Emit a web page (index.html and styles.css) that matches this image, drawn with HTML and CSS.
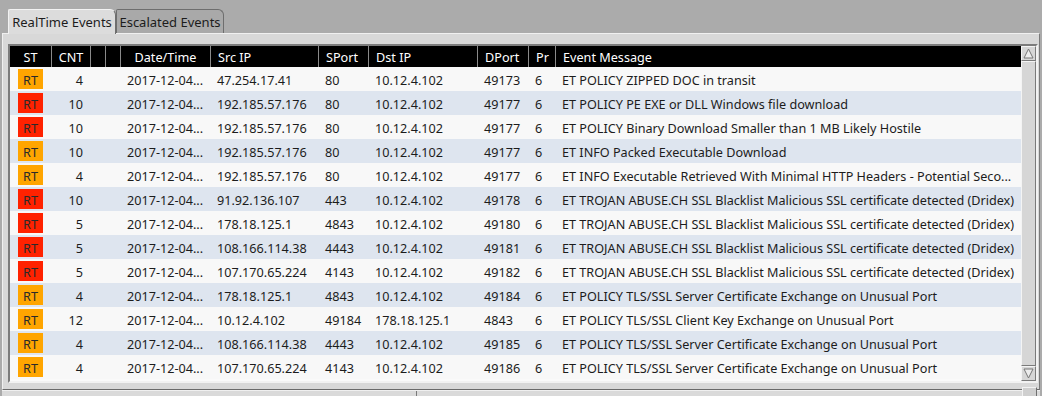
FILE: index.html
```html
<!DOCTYPE html>
<html lang="en">
<head>
    <meta charset="UTF-8">
    <title>Event Viewer</title>
    <link rel="stylesheet" href="styles.css">
</head>
<body>
    <!-- Tabs -->
    <div class="tabs">
        <div class="tab active">RealTime Events</div>
        <div class="tab">Escalated Events</div>
    </div>

    <!-- Tab panel with event table -->
    <div class="panel">
        <div class="table-box">
            <div class="table">
                <div class="row head">
                    <div class="c center">ST</div>
                    <div class="c center">CNT</div>
                    <div class="c"></div>
                    <div class="c"></div>
                    <div class="c center">Date/Time</div>
                    <div class="c">Src IP</div>
                    <div class="c">SPort</div>
                    <div class="c">Dst IP</div>
                    <div class="c">DPort</div>
                    <div class="c">Pr</div>
                    <div class="c">Event Message</div>
                </div>
                <div id="rows"></div>
            </div>
            <div class="vscroll">
                <div class="sbtn">
                    <svg width="13" height="13" viewBox="0 0 13 13"><polygon points="6.5,2 11,11 2,11" fill="#ececec" stroke="#777" stroke-width="1"/></svg>
                </div>
                <div class="slider"></div>
                <div class="sbtn">
                    <svg width="13" height="13" viewBox="0 0 13 13"><polygon points="6.5,11 11,2 2,2" fill="#ececec" stroke="#777" stroke-width="1"/></svg>
                </div>
            </div>
        </div>
    </div>
    <div class="hbar">
        <div class="hthumb"></div>
    </div>
    <div class="corner"></div>

    <script>
        const events = [
            ['o', 4, '47.254.17.41', 80, '10.12.4.102', 49173, 'ET POLICY ZIPPED DOC in transit'],
            ['r', 10, '192.185.57.176', 80, '10.12.4.102', 49177, 'ET POLICY PE EXE or DLL Windows file download'],
            ['r', 10, '192.185.57.176', 80, '10.12.4.102', 49177, 'ET POLICY Binary Download Smaller than 1 MB Likely Hostile'],
            ['o', 10, '192.185.57.176', 80, '10.12.4.102', 49177, 'ET INFO Packed Executable Download'],
            ['o', 4, '192.185.57.176', 80, '10.12.4.102', 49177, 'ET INFO Executable Retrieved With Minimal HTTP Headers - Potential Seco...'],
            ['r', 10, '91.92.136.107', 443, '10.12.4.102', 49178, 'ET TROJAN ABUSE.CH SSL Blacklist Malicious SSL certificate detected (Dridex)'],
            ['r', 5, '178.18.125.1', 4843, '10.12.4.102', 49180, 'ET TROJAN ABUSE.CH SSL Blacklist Malicious SSL certificate detected (Dridex)'],
            ['r', 5, '108.166.114.38', 4443, '10.12.4.102', 49181, 'ET TROJAN ABUSE.CH SSL Blacklist Malicious SSL certificate detected (Dridex)'],
            ['r', 5, '107.170.65.224', 4143, '10.12.4.102', 49182, 'ET TROJAN ABUSE.CH SSL Blacklist Malicious SSL certificate detected (Dridex)'],
            ['o', 4, '178.18.125.1', 4843, '10.12.4.102', 49184, 'ET POLICY TLS/SSL Server Certificate Exchange on Unusual Port'],
            ['o', 12, '10.12.4.102', 49184, '178.18.125.1', 4843, 'ET POLICY TLS/SSL Client Key Exchange on Unusual Port'],
            ['o', 4, '108.166.114.38', 4443, '10.12.4.102', 49185, 'ET POLICY TLS/SSL Server Certificate Exchange on Unusual Port'],
            ['o', 4, '107.170.65.224', 4143, '10.12.4.102', 49186, 'ET POLICY TLS/SSL Server Certificate Exchange on Unusual Port']
        ];

        let html = '';
        events.forEach(function (e) {
            html += '<div class="row">' +
                '<div class="c center"><span class="badge ' + (e[0] === 'r' ? 'red' : 'orange') + '">RT</span></div>' +
                '<div class="c right">' + e[1] + '</div>' +
                '<div class="c"></div><div class="c"></div>' +
                '<div class="c">2017-12-04...</div>' +
                '<div class="c">' + e[2] + '</div>' +
                '<div class="c">' + e[3] + '</div>' +
                '<div class="c">' + e[4] + '</div>' +
                '<div class="c">' + e[5] + '</div>' +
                '<div class="c">6</div>' +
                '<div class="c">' + e[6] + '</div>' +
                '</div>';
        });
        document.getElementById('rows').innerHTML = html;
    </script>
</body>
</html>
```

FILE: styles.css
```css
body {
    margin: 0;
    width: 1042px;
    height: 396px;
    overflow: hidden;
    background: #ababab;
    font-family: "Noto Sans", sans-serif;
    color: #1c1c1c;
}

.tabs {
    display: flex;
    height: 24px;
    padding: 9px 0 0 8px;
}

.tab {
    box-sizing: border-box;
    width: 108px;
    height: 24px;
    font-size: 13px;
    line-height: 24px;
    text-align: center;
    background: #a9a9a9;
    border: 1px solid #6e6e6e;
    border-bottom: none;
    border-radius: 2px 6px 0 0;
}

.tab.active {
    position: relative;
    z-index: 1;
    height: 25px;
    margin-bottom: -1px;
    background: #dcdcdc;
    border-color: #f2f2f2 #6e6e6e #6e6e6e #f2f2f2;
}

.panel {
    box-sizing: border-box;
    height: 357px;
    margin: 0 2px;
    padding: 10px 0 0 5px;
    background: #d8d8d8;
    border-top: 1px solid #f0f0f0;
    border-left: 1px solid #f0f0f0;
    border-right: 1px solid #7a7a7a;
    border-bottom: 1px solid #6a6a6a;
}

.table-box {
    display: flex;
    width: 1030px;
    height: 339px;
    box-sizing: border-box;
    border: 2px solid;
    border-color: #7c7c7c #f2f2f2 #f2f2f2 #7c7c7c;
    background: #fafafa;
}

.table {
    width: 1011px;
    overflow: hidden;
}

.row {
    display: grid;
    grid-template-columns: 41px 39px 15px 15px 90px 108px 50px 109px 51px 27px 466px;
    height: 24px;
    font-size: 12.65px;
    line-height: 26px;
}

#rows .row:nth-child(odd) {
    background: #f8f8f8;
}

#rows .row:nth-child(even) {
    background: #dee5ef;
}

.row.head {
    height: 21px;
    line-height: 22px;
    background: #000;
    color: #fff;
}

.c {
    height: 100%;
    padding: 0 7px;
    white-space: nowrap;
    overflow: hidden;
}

.head .c {
    border-left: 1px solid #8a8a8a;
}

.head .c:first-child {
    border-left: none;
}

.center {
    padding: 0;
    text-align: center;
}

.right {
    text-align: right;
}

.badge {
    display: inline-block;
    width: 25px;
    height: 20px;
    margin-top: 2px;
    line-height: 22px;
    vertical-align: top;
    color: #2a2a2a;
}

.badge.orange {
    background: #ffa500;
}

.badge.red {
    background: #ff2200;
}

.vscroll {
    display: flex;
    flex-direction: column;
    width: 15px;
    background: #d4d4d4;
}

.sbtn {
    box-sizing: border-box;
    height: 15px;
    border: 1px solid;
    border-color: #f4f4f4 #7a7a7a #7a7a7a #f4f4f4;
    background: #d6d6d6;
    display: flex;
    align-items: center;
    justify-content: center;
}

.slider {
    flex: 1;
    box-sizing: border-box;
    border: 1px solid;
    border-color: #f4f4f4 #7a7a7a #7a7a7a #f4f4f4;
    background: #d6d6d6;
}

.hbar {
    height: 6px;
    margin: 0 2px;
    background: #dadada;
    border-top: 1px solid #f0f0f0;
}

.hthumb {
    width: 414px;
    height: 6px;
    border-right: 1px solid #7a7a7a;
}

.corner {
    position: absolute;
    left: 1022px;
    top: 387px;
    width: 13px;
    height: 10px;
    background: #cfcfcf;
    border-top: 1px solid #f2f2f2;
    border-left: 1px solid #f2f2f2;
    border-right: 1px solid #6f6f6f;
}
```
